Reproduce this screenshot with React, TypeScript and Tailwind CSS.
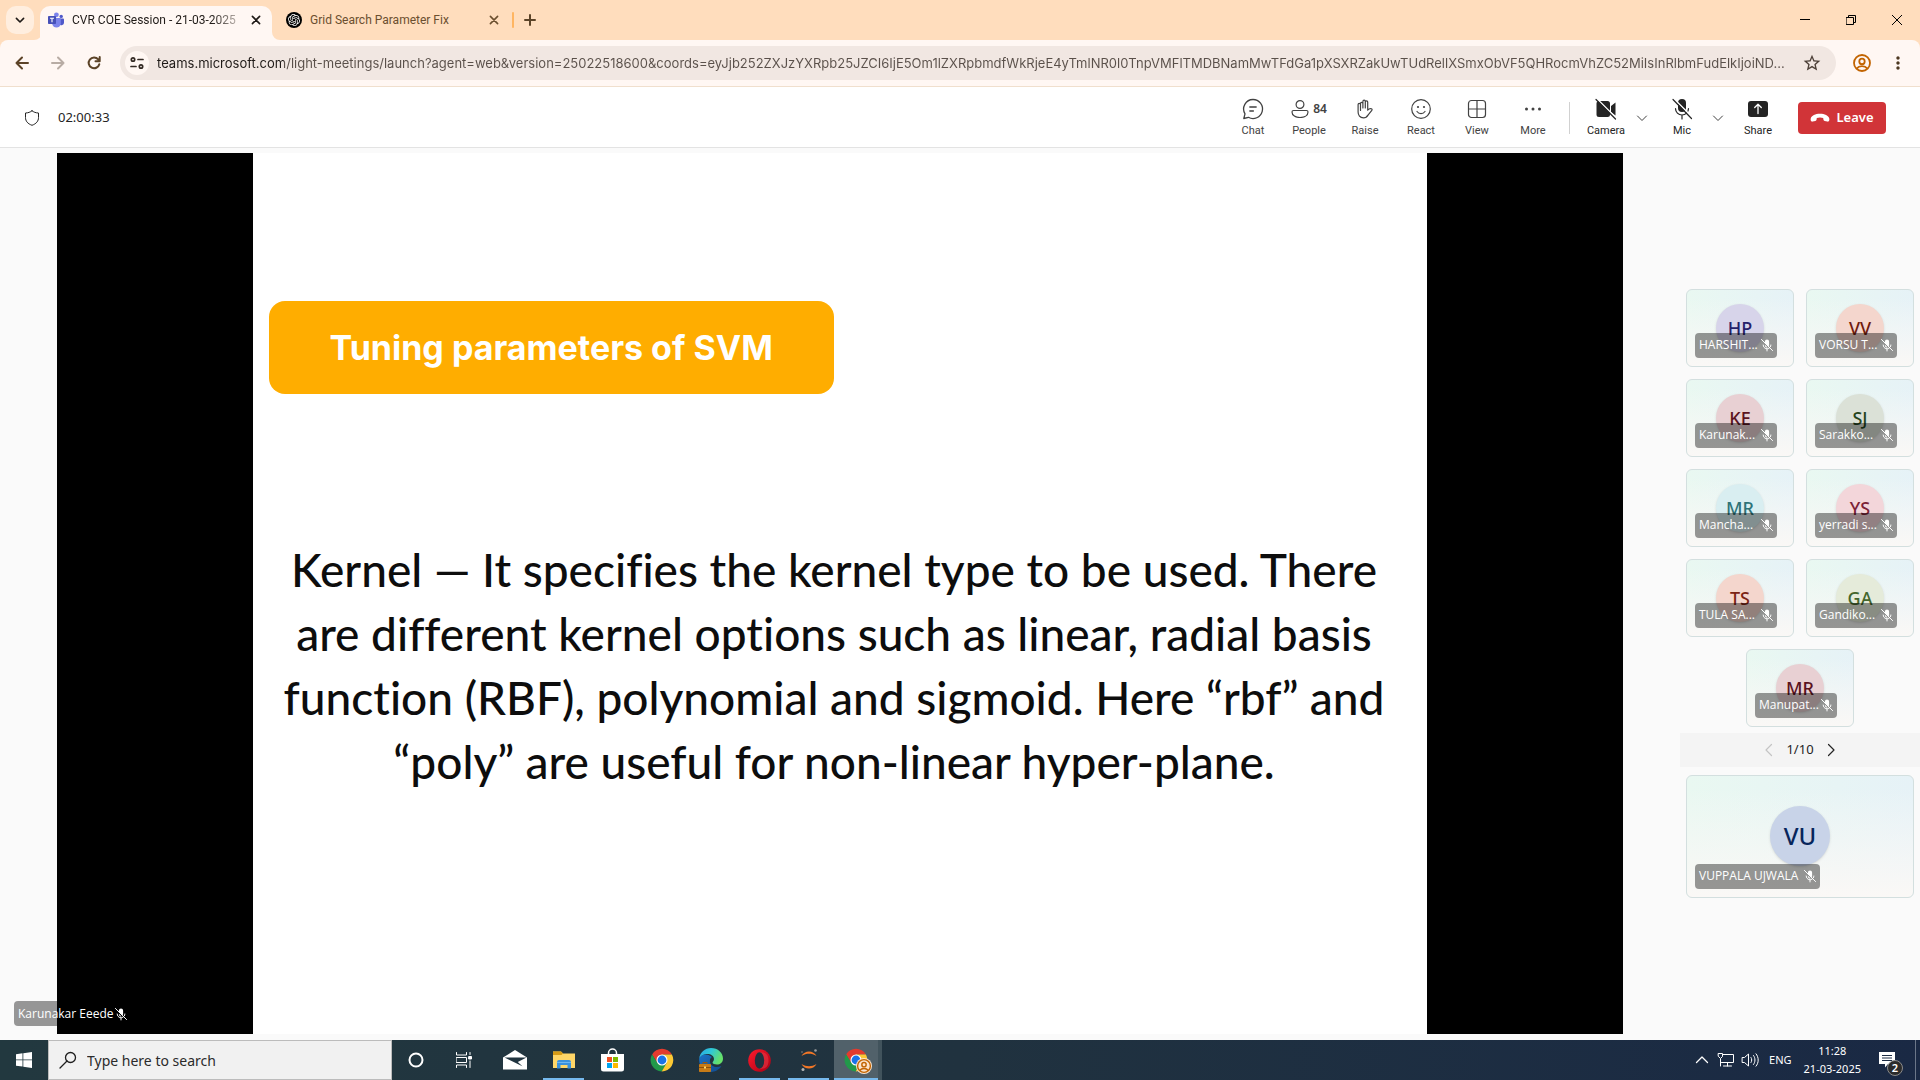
import type { ReactNode } from "react";
import { SiOpenai } from "react-icons/si";
import { MdOutlineStarBorder, MdMoreVert } from "react-icons/md";

const PAGE_URL =
  "teams.microsoft.com/light-meetings/launch?agent=web&version=25022518600&coords=eyJjb252ZXJzYXRpb25JZCI6IjE5Om1lZXRpbmdfWkRjeE4yTmlNR0l0TnpVMFlTMDBNamMwTFdGa1pXSXRZakUwTUdRellXSmxObVF5QHRocmVhZC52MiIsInRlbmFudElkIjoiND...";

type Stroke = { className?: string; children: ReactNode; width?: number; size?: number };

function Line({ className = "size-5", children, width = 1, size = 20 }: Stroke) {
  return (
    <svg
      className={className}
      viewBox={`0 0 ${size} ${size}`}
      fill="none"
      stroke="currentColor"
      strokeWidth={width}
      strokeLinecap="round"
      strokeLinejoin="round"
      aria-hidden="true"
    >
      {children}
    </svg>
  );
}

function MicOff({ className = "size-4" }: { className?: string }) {
  return (
    <Line className={className} width={1.4}>
      <path d="M7 7.500V5a3 3 0 0 1 6 0v5.500c0 .6-.1 1-.3 1.400zM7 9.500l4 4A3 3 0 0 1 7 10.500z" fill="currentColor" stroke="none" />
      <path d="M4.500 10a5.500 5.500 0 0 0 8.500 4.600M15.500 10c0 .9-.2 1.800-.6 2.500M10 15.500v3" />
      <path d="M2 2l16 16" />
    </Line>
  );
}

function TeamsLogo() {
  return (
    <svg className="size-4" viewBox="0 0 16 16" aria-hidden="true">
      <circle cx="13.2" cy="4.4" r="1.7" fill="#5059c9" />
      <path d="M11 6.6h4.2c.4 0 .8.4.8.8v3.2a2.6 2.6 0 0 1-4.6 1.7z" fill="#5059c9" />
      <circle cx="8.4" cy="2.8" r="2.4" fill="#7b83eb" />
      <path d="M5 6h7c.5 0 .8.4.8.8v4.4a4.3 4.3 0 0 1-8.6 0V6.8c0-.5.3-.8.8-.8z" fill="#7b83eb" />
      <rect x="0" y="4" width="8" height="8" rx=".8" fill="#4650b8" />
      <path d="M2 6.2h4M4 6.2v4" stroke="#fff" strokeWidth="1.1" />
    </svg>
  );
}

function ChromeLogo() {
  return (
    <svg className="size-6" viewBox="0 0 48 48" aria-hidden="true">
      <path d="M43.8 13A23 23 0 0 0 4.2 13L14.5 29.5 24 24V13z" fill="#e33b2e" />
      <path d="M4.2 12.5A23 23 0 0 0 23.4 47L33.5 29.5 24 24 14.5 29.5z" fill="#21994a" />
      <path d="M23.4 47A23 23 0 0 0 43.8 13H24v11l9.5 5.5z" fill="#fcc934" />
      <circle cx="24" cy="24" r="11" fill="#fff" />
      <circle cx="24" cy="24" r="8.8" fill="#1a73e8" />
    </svg>
  );
}

function ProfileGlyph({ className, stroke = "#c26401", fill = "none" }: { className: string; stroke?: string; fill?: string }) {
  return (
    <svg className={className} viewBox="0 0 20 20" fill={fill} stroke={stroke} strokeWidth="1.8" aria-hidden="true">
      <circle cx="10" cy="10" r="8" />
      <circle cx="10" cy="8.4" r="2.7" fill="none" />
      <path d="M4.6 15.6c1.4-1.7 3.2-2.4 5.4-2.4s4 .7 5.4 2.4" fill="none" />
    </svg>
  );
}

function BrowserTabs() {
  return (
    <header className="flex h-10 items-end bg-[#ffddbd] font-[Roboto,sans-serif] text-xs">
      <button aria-label="Search tabs" className="mb-1.5 ml-1.5 flex size-7 items-center justify-center rounded-[10px] bg-[#ffeedf] text-[#1f1a17]">
        <Line className="size-4" width={2}>
          <path d="M5.5 8l4.5 4.5L14.5 8" />
        </Line>
      </button>
      <svg className="size-2 text-[#fff7f3]" viewBox="0 0 8 8" aria-hidden="true"><path d="M8 0v8H0a8 8 0 0 0 8-8z" fill="currentColor" /></svg>
      <div className="-ml-0.5 flex h-[34px] w-[232px] items-center rounded-t-[10px] bg-[#fff7f3] pr-1 pb-1.5 pl-2 text-[#1f1a17]">
        <TeamsLogo />
        <span className="ml-2 w-[164px] overflow-hidden whitespace-nowrap bg-linear-to-r from-[#1f1a17] from-85% to-[#b5aca6] bg-clip-text text-transparent">
          CVR COE Session - 21-03-2025
        </span>
        <button aria-label="Close tab" className="ml-auto flex size-6 items-center justify-center">
          <Line className="size-4" width={2}><path d="M5.5 5.5l9 9M14.5 5.5l-9 9" /></Line>
        </button>
      </div>
      <svg className="size-2 text-[#fff7f3]" viewBox="0 0 8 8" aria-hidden="true"><path d="M0 0v8h8a8 8 0 0 1-8-8z" fill="currentColor" /></svg>
      <div className="flex h-[34px] w-[226px] items-center pb-1.5 pl-1.5 text-[#6b4f2f]">
        <span className="flex size-4 items-center justify-center rounded-full bg-black text-white">
          <SiOpenai className="size-3" />
        </span>
        <span className="ml-2 whitespace-nowrap">Grid Search Parameter Fix</span>
        <button aria-label="Close tab" className="ml-auto flex size-6 items-center justify-center">
          <Line className="size-4" width={2}><path d="M5.5 5.5l9 9M14.5 5.5l-9 9" /></Line>
        </button>
      </div>
      <span className="mb-3 ml-1.5 h-4 w-0.5 rounded bg-[#ffb561]" />
      <button aria-label="New tab" className="mb-2 ml-1 flex size-6 items-center justify-center text-[#5c4327]">
        <Line className="size-5" width={2}><path d="M10 5v10M5 10h10" /></Line>
      </button>
      <div className="ml-auto flex h-10 text-black">
        <button aria-label="Minimize" className="flex w-[46px] items-center justify-center">
          <Line className="size-2.5" size={10}><path d="M0 4.5h10" /></Line>
        </button>
        <button aria-label="Restore" className="flex w-[46px] items-center justify-center">
          <Line className="size-2.5" size={10}><path d="M.5 2.5h7v7h-7zM2.5 2.5v-2h7v7h-2" /></Line>
        </button>
        <button aria-label="Close" className="flex w-[46px] items-center justify-center">
          <Line className="size-2.5" size={10}><path d="M0 0l10 10M10 0L0 10" /></Line>
        </button>
      </div>
    </header>
  );
}

function AddressBar() {
  return (
    <div className="bg-[#ffddbd]">
      <div className="flex h-[47px] items-center rounded-t-lg border-b border-[#f0dfcd] bg-[#fff7f3] pl-2.5 text-[#5c4327]">
        <button aria-label="Back" className="flex size-6 items-center justify-center">
          <Line className="size-4" width={2} size={16}><path d="M14 8H2.5M8 2.5L2.5 8 8 13.5" /></Line>
        </button>
        <button aria-label="Forward" className="ml-3 flex size-6 items-center justify-center text-[#b8aca4]">
          <Line className="size-4" width={2} size={16}><path d="M2 8h11.5M8 2.5L13.5 8 8 13.5" /></Line>
        </button>
        <button aria-label="Reload" className="ml-3 flex size-6 items-center justify-center">
          <Line className="size-4" width={2} size={16}><path d="M13.3 9.200A5.400 5.400 0 1 1 12.200 4.400L13.600 6M13.700 2v4.200H9.500" /></Line>
        </button>
        <div className="ml-3.5 flex h-[34px] min-w-0 flex-1 items-center rounded-full bg-[#f1e7e2] pl-[5px]">
          <button aria-label="Site information" className="flex size-6 shrink-0 items-center justify-center rounded-full bg-[#fff7f3] text-[#332a24]">
            <Line className="size-4" width={1.7} size={16}>
              <circle cx="4" cy="4.5" r="1.7" /><path d="M9 4.5h5M2 11.5h5" /><circle cx="12" cy="11.5" r="1.7" />
            </Line>
          </button>
          <input
            aria-label="Address"
            readOnly
            value={PAGE_URL}
            className="ml-2 h-6 min-w-0 flex-1 bg-[linear-gradient(90deg,#1f1a17_127px,#5a504a_127px)] bg-clip-text font-[Inter,sans-serif] text-[13px] text-transparent outline-none"
          />
          <button aria-label="Bookmark this tab" className="mr-3.5 ml-2 text-[#4d4038]">
            <MdOutlineStarBorder className="size-5" />
          </button>
        </div>
        <button aria-label="Profile" className="ml-4"><ProfileGlyph className="size-5" /></button>
        <button aria-label="Menu" className="mr-3 ml-4 text-[#4d3820]"><MdMoreVert className="size-5" /></button>
      </div>
    </div>
  );
}

function Tool({ label, children, className = "w-14 text-[#424242]" }: { label: string; children: ReactNode; className?: string }) {
  return (
    <button className={`flex flex-col items-center ${className}`}>
      <span className="flex h-6 items-center">{children}</span>
      <span className="mt-0.5 font-[Roboto,sans-serif] text-[11px] leading-4">{label}</span>
    </button>
  );
}

function Chevron({ label }: { label: string }) {
  return (
    <button aria-label={label} className="flex w-6 items-center justify-center text-[#424242]">
      <Line className="size-3" size={12}><path d="M1.5 4L6 8.500 10.500 4" /></Line>
    </button>
  );
}

function MeetingBar() {
  return (
    <div className="flex h-[61px] items-center border-b border-[#e3e3e3] bg-white pt-px pl-6 text-[#242424]">
      <Line className="size-4" size={16}>
        <path d="M8 .8c1.800 1.400 3.800 2.100 6.500 2.200v4.500c0 3.700-2.200 6.200-6.500 7.800-4.300-1.600-6.500-4.100-6.500-7.800V3C4.200 2.900 6.200 2.200 8 .8z" />
      </Line>
      <time className="ml-[18px] text-[13px]">02:00:33</time>
      <div className="ml-auto flex items-center">
        <Tool label="Chat">
          <Line className="size-6" size={24} width={1.3}>
            <path d="M12 2.500a9.500 9.500 0 1 1-4.600 17.800l-4.600 1.200 1.200-4.600A9.500 9.500 0 0 1 12 2.500zM8.800 10h6.400M8.800 14h3.600" />
          </Line>
        </Tool>
        <Tool label="People">
          <Line className="size-[18px]" size={18} width={1.2}>
            <circle cx="9" cy="4.500" r="3.900" />
            <path d="M2.500 10.500h13c.8 0 1.500.7 1.500 1.500 0 3.600-3.600 5.500-8 5.500S1 15.600 1 12c0-.8.7-1.500 1.500-1.500z" />
          </Line>
          <b className="ml-1 text-xs font-semibold">84</b>
        </Tool>
        <Tool label="Raise">
          <Line className="size-5" width={1.2}>
            <path d="M5.500 11.500V4.600a1.200 1.200 0 0 1 2.400 0V9M7.900 9V2.400a1.200 1.200 0 0 1 2.400 0V9M10.300 9V3.100a1.200 1.200 0 0 1 2.400 0V9.500M3.100 11V5.600a1.200 1.200 0 0 1 2.400 0M12.700 3.500v7.700c1-1.200 2.500-1.900 3.700-1.400.9.400.9 1.200.2 1.900l-3.400 4.200c-1.300 2.200-2.700 3-4.700 3-3.600 0-5.400-2.600-5.400-5.800V11" />
          </Line>
        </Tool>
        <Tool label="React">
          <Line width={1.2}>
            <circle cx="10" cy="10" r="9.300" />
            <path d="M6 12.500c1 1.500 2.300 2.200 4 2.200s3-.7 4-2.200" />
            <circle cx="7" cy="8" r="1.100" fill="currentColor" stroke="none" /><circle cx="13" cy="8" r="1.100" fill="currentColor" stroke="none" />
          </Line>
        </Tool>
        <Tool label="View">
          <Line width={1.2}><rect x="1.500" y="1.500" width="17" height="17" rx="3" /><path d="M10 1.500v17M1.500 10h17" /></Line>
        </Tool>
        <Tool label="More">
          <svg className="size-5" viewBox="0 0 20 20" fill="currentColor" aria-hidden="true">
            <circle cx="3.500" cy="10" r="1.500" /><circle cx="10" cy="10" r="1.500" /><circle cx="16.500" cy="10" r="1.500" />
          </svg>
        </Tool>
        <span className="mr-3 ml-2 h-8 w-px bg-[#d1d1d1]" />
        <Tool label="Camera" className="w-12">
          <Line size={22} className="size-[22px]" width={1.2}>
            <path d="M5 3h7.500A2.500 2.500 0 0 1 15 5.500v11a2.500 2.500 0 0 1-2.500 2.500H4a2.500 2.500 0 0 1-2.500-2.500v-11A2.500 2.500 0 0 1 4 3zM16 8l4.500-3.500v13L16 14z" fill="currentColor" stroke="none" />
            <path d="M2.200 1l19 19" stroke="#fff" strokeWidth="1.600" />
            <path d="M1 1.500l19.500 19.500" />
          </Line>
        </Tool>
        <Chevron label="Camera options" />
        <Tool label="Mic" className="ml-1 w-12">
          <Line size={22} className="size-[22px]" width={1.2}>
            <rect x="7" y="1" width="8" height="13" rx="4" fill="currentColor" stroke="none" />
            <path d="M4.500 10.500a6.500 6.500 0 0 0 13 0M11 17v4" />
            <path d="M3.200 1l18 18" stroke="#fff" strokeWidth="1.600" />
            <path d="M2 1.500L20.500 20.500" />
          </Line>
        </Tool>
        <Chevron label="Mic options" />
        <Tool label="Share" className="ml-1 w-12">
          <Line width={1.3}>
            <rect x="0" y="2" width="20" height="16" rx="3" fill="currentColor" stroke="none" />
            <path d="M10 14.500v-9M6.700 8.500L10 5.200l3.300 3.300" stroke="#fff" />
          </Line>
        </Tool>
        <button className="mr-[34px] ml-4 flex h-8 w-[88px] items-center justify-center gap-1.5 rounded bg-[#d13438] text-[13px] font-semibold text-white">
          <svg className="size-5" viewBox="0 0 20 20" fill="currentColor" aria-hidden="true">
            <path d="M10 5.800c4.700 0 8.400 1.800 9.200 4.500.4 1.300.1 2.700-.8 3.200-.3.200-.7.200-1.100.1l-2.600-.6c-.7-.2-1.200-.7-1.300-1.400l-.2-1.600c-2-.7-4.400-.7-6.400 0l-.2 1.600c-.1.700-.6 1.200-1.300 1.400l-2.600.6c-.4.100-.8.100-1.100-.1-.9-.5-1.200-1.900-.8-3.200C1.600 7.600 5.300 5.800 10 5.800z" />
          </svg>
          Leave
        </button>
      </div>
    </div>
  );
}

type Person = { initials: string; name: string; color: string };

const PEOPLE: Person[] = [
  { initials: "HP", name: "HARSHIT...", color: "bg-[#d7d4ea] text-[#26216a]" },
  { initials: "VV", name: "VORSU T...", color: "bg-[#f4d6cd] text-[#701b0e]" },
  { initials: "KE", name: "Karunak...", color: "bg-[#e8d0d3] text-[#5b1320]" },
  { initials: "SJ", name: "Sarakko...", color: "bg-[#dbe1d7] text-[#26451d]" },
  { initials: "MR", name: "Mancha...", color: "bg-[#d9eef1] text-[#2f7378]" },
  { initials: "YS", name: "yerradi s...", color: "bg-[#f3d6da] text-[#7c2237]" },
  { initials: "TS", name: "TULA SA...", color: "bg-[#f4d6cd] text-[#7c2415]" },
  { initials: "GA", name: "Gandiko...", color: "bg-[#e5ebda] text-[#44662c]" },
  { initials: "MR", name: "Manupat...", color: "bg-[#e8d0d3] text-[#5b1320]" },
];

const TILE =
  "relative flex items-center justify-center rounded-md border border-[#d3dfdf] bg-[linear-gradient(to_bottom,transparent_10%,#faf8f6_100%),linear-gradient(to_right,#e9f8f1,#e6f2f7)]";

function NameTag({ name, className = "" }: { name: string; className?: string }) {
  return (
    <span className={`absolute flex h-[25px] items-center justify-between rounded bg-black/40 pr-[3px] pl-1 font-['Open_Sans',sans-serif] text-xs whitespace-nowrap text-white ${className}`}>
      {name}
      <MicOff className="size-3.5 shrink-0" />
    </span>
  );
}

function Tile({ person }: { person: Person }) {
  return (
    <li className={`h-[78px] w-[108px] ${TILE}`}>
      <span className={`flex size-12 items-center justify-center rounded-full text-lg font-medium shadow-sm ${person.color}`}>{person.initials}</span>
      <NameTag name={person.name} className="bottom-2 left-2 w-[82px]" />
    </li>
  );
}

function Roster() {
  return (
    <aside className="flex w-60 shrink-0 flex-col items-center justify-center pb-0.5">
      <ul className="flex flex-wrap justify-center gap-3 px-1.5">
        {PEOPLE.map((p) => (
          <Tile key={p.name} person={p} />
        ))}
      </ul>
      <nav aria-label="Participant pages" className="mt-1.5 flex h-[34px] w-full items-center justify-center gap-2.5 bg-[#f4f4f4] text-[13px] text-[#242424]">
        <button aria-label="Previous page" disabled className="text-[#c4c4c4]">
          <Line className="size-3.5" size={14} width={1.2}><path d="M9.500 1.500L4 7l5.500 5.500" /></Line>
        </button>
        <span>1/10</span>
        <button aria-label="Next page">
          <Line className="size-3.5" size={14} width={1.2}><path d="M4.500 1.500L10 7l-5.500 5.500" /></Line>
        </button>
      </nav>
      <div className="mt-2 w-full px-1.5">
        <div className={`h-[123px] ${TILE}`}>
          <span className="flex size-[60px] items-center justify-center rounded-full bg-[#c8d3e8] text-2xl font-medium text-[#07255b] shadow">VU</span>
          <NameTag name="VUPPALA UJWALA" className="bottom-2 left-2 w-[125px]" />
        </div>
      </div>
    </aside>
  );
}

function SharedScreen() {
  return (
    <main className="relative flex min-w-0 flex-1 justify-center pt-[5px] pb-1.5">
      <section aria-label="Shared screen" className="flex aspect-video h-full justify-center bg-black">
        <div className="aspect-4/3 h-full bg-white pt-[148px] pl-4">
          <h1 className="flex h-[93px] w-[565px] items-center justify-center rounded-2xl bg-[#ffad00] font-[Inter,sans-serif] text-[34px] font-bold text-white">
            Tuning parameters of SVM
          </h1>
          <p className="mt-36 pr-7 text-center font-[Lato,sans-serif] text-[46px] leading-16 font-medium whitespace-nowrap text-[#0d0d0d] [font-variant-ligatures:none]">
            Kernel — It specifies the kernel type to be used. There
            <br />
            are different kernel options such as linear, radial basis
            <br />
            function (RBF), polynomial and sigmoid. Here “rbf” and
            <br />
            “poly” are useful for non-linear hyper-plane.
          </p>
        </div>
      </section>
      <NameTag name="Karunakar Eeede" className="bottom-3.5 left-3.5 w-[116px]" />
    </main>
  );
}

function TaskButton({ label, children, open = false, className = "w-[49px]" }: { label: string; children: ReactNode; open?: boolean; className?: string }) {
  return (
    <button aria-label={label} className={`relative flex h-10 items-center justify-center ${className}`}>
      {children}
      {open && <span className="absolute inset-x-1 bottom-0 h-0.5 bg-[#76b9ed]" />}
    </button>
  );
}

function Taskbar() {
  return (
    <footer className="flex h-10 shrink-0 items-center bg-linear-to-r from-[#22383f] via-[#20323f] to-[#1a2944] text-white">
      <button aria-label="Start" className="flex w-12 justify-center">
        <svg className="size-4" viewBox="0 0 16 16" fill="currentColor" aria-hidden="true">
          <path d="M0 2.200l6.500-.9v6.200H0zM7.300 1.200L16 0v7.500H7.300zM0 8.300h6.500v6.300L0 13.700zM7.300 8.300H16V16l-8.700-1.200z" />
        </svg>
      </button>
      <label className="flex h-10 w-[344px] items-center border border-[#bcbcbc] bg-[#f1f1f1] pl-2.5 text-[#1f1f1f]">
        <Line className="size-[18px]" size={18} width={1.3}><circle cx="11.500" cy="6.500" r="5" /><path d="M8 10L1 17" /></Line>
        <input aria-label="Type here to search" placeholder="Type here to search" className="ml-2.5 min-w-0 flex-1 bg-transparent pt-0.5 text-sm outline-none placeholder:text-[#2b2b2b]" />
      </label>
      <TaskButton label="Cortana" className="w-12">
        <svg className="size-4" viewBox="0 0 16 16" aria-hidden="true"><circle cx="8" cy="8" r="6.500" fill="none" stroke="#fff" strokeWidth="2" /></svg>
      </TaskButton>
      <TaskButton label="Task View" className="mr-0.5 w-12">
        <Line className="size-4" size={16}>
          <path d="M.5.500v2.500h10V.500M.5 15.500V13h10v2.500M.5 5.500h10v5H.500zM14 .500v2M14 9v6.500" />
          <rect x="13" y="4.500" width="2.500" height="2.500" fill="currentColor" />
        </Line>
      </TaskButton>
      <TaskButton label="Mail">
        <svg className="h-5 w-6" viewBox="0 0 24 20" aria-hidden="true">
          <path d="M0 7.500L12 0l12 7.500V19.500H0z" fill="#fff" />
          <path d="M1.500 7.500h22L14.800 12l4.600 4.200z" fill="#20343f" />
        </svg>
      </TaskButton>
      <TaskButton label="File Explorer" open>
        <svg className="size-[22px]" viewBox="0 0 22 22" aria-hidden="true">
          <path d="M0 2.500h8l2 2h12V19H0z" fill="#ffd667" />
          <path d="M0 2.500h8l2 2-1.500 1.500H0z" fill="#d79b15" />
          <path d="M4 19.500v-6.500a2 2 0 0 1 2-2h10a2 2 0 0 1 2 2v6.500h-3.500V16h-7v3.500z" fill="#3b91dc" />
          <path d="M4 13.500h14" stroke="#6db6f0" />
        </svg>
      </TaskButton>
      <TaskButton label="Microsoft Store">
        <svg className="h-6 w-[23px]" viewBox="0 0 23 24" aria-hidden="true">
          <path d="M7.500 6.500V5a4 4 0 0 1 8 0v1.500" fill="none" stroke="#fff" strokeWidth="1.500" />
          <path d="M0 6h23v15a2.500 2.500 0 0 1-2.500 2.500h-18A2.500 2.500 0 0 1 0 21z" fill="#fff" />
          <path d="M6 9h5v5H6z" fill="#f25022" /><path d="M12 9h5v5h-5z" fill="#7fba00" />
          <path d="M6 15h5v5H6z" fill="#00a4ef" /><path d="M12 15h5v5h-5z" fill="#ffb900" />
        </svg>
      </TaskButton>
      <TaskButton label="Chrome"><ChromeLogo /></TaskButton>
      <TaskButton label="Edge">
        <svg className="size-6" viewBox="0 0 24 24" aria-hidden="true">
          <defs>
            <linearGradient id="edge-top" x1="0" y1="0" x2="1" y2=".4"><stop stopColor="#2aa5e5" /><stop offset=".5" stopColor="#2fc8d8" /><stop offset="1" stopColor="#66e16a" /></linearGradient>
            <linearGradient id="edge-low" x1="0" y1="0" x2="1" y2="1"><stop stopColor="#1b72c8" /><stop offset="1" stopColor="#114a8b" /></linearGradient>
          </defs>
          <path d="M.3 10A12 12 0 0 0 20.500 20.500c.9-.8 1.500-1.700 1.800-2.500-5 2.500-10.500.5-11.300-4C10.500 11 12 9.500 13 9 8 5 2 6 .3 10z" fill="url(#edge-low)" />
          <path d="M.2 10.500C1 4.500 6 0 12 0c7 0 12 5 12 10.500 0 4-3 6-6 6-2.500 0-4.500-1-4.500-2 0-.8 1.500-1.500 1.500-3.500 0-3-3-5-6.500-5-4 0-7.300 2-8.300 4.500z" fill="url(#edge-top)" />
          <rect x="0" y="16" width="12" height="8" rx=".8" fill="#c77b17" /><path d="M4 16v-1.500h4V16" fill="none" stroke="#9a5a0b" /><path d="M0 19.500h12" stroke="#8b4f08" /><path d="M5 18.500h2v2H5z" fill="#ffd667" />
        </svg>
      </TaskButton>
      <TaskButton label="Opera" open>
        <svg className="size-[23px]" viewBox="0 0 23 23" aria-hidden="true">
          <defs><linearGradient id="opera" x1="0" y1="0" x2="1" y2="1"><stop stopColor="#ff1b2d" /><stop offset="1" stopColor="#a70014" /></linearGradient></defs>
          <circle cx="11.500" cy="11.500" r="11.300" fill="url(#opera)" />
          <path d="M11.500 3c5 0 9 1.500 9 8.500s-4 8.500-9 8.500z" fill="#e8404c" opacity=".5" />
          <ellipse cx="11.500" cy="11.500" rx="4.700" ry="8.300" fill="#20323f" />
        </svg>
      </TaskButton>
      <TaskButton label="Jupyter" open>
        <svg className="h-6 w-5" viewBox="0 0 20 24" aria-hidden="true">
          <path d="M2.500 8C4 5 7 3.500 10 3.500S16 5 17.500 8C15 6.300 12.500 5.800 10 5.800S5 6.300 2.500 8zM2.500 16c1.500 3 4.500 4.500 7.500 4.500s6-1.500 7.500-4.500c-2.500 1.700-5 2.200-7.500 2.200S5 17.700 2.500 16z" fill="#f37726" />
          <circle cx="16.500" cy="2.500" r="1.300" fill="#9e9e9e" /><circle cx="4" cy="21.500" r="1.500" fill="#b5b5b5" /><circle cx="3" cy="4" r=".8" fill="#8a8a8a" />
        </svg>
      </TaskButton>
      <button aria-label="Chrome, current window" className="relative ml-px flex h-10 w-12 items-center justify-center border-r-4 border-[#41535c] bg-[#51616a]">
        <ChromeLogo />
        <span className="absolute right-1.5 bottom-1.5"><ProfileGlyph className="size-4 rounded-full bg-[#fbe3cb]" /></span>
        <span className="absolute inset-x-0 bottom-0 h-0.5 bg-[#76b9ed]" />
      </button>
      <div className="ml-auto flex h-10 items-center">
        <button aria-label="Show hidden icons"><Line className="size-3.5" size={14} width={1.3}><path d="M1.500 9.500L7 4l5.500 5.500" /></Line></button>
        <button aria-label="Network" className="ml-2">
          <Line className="size-[18px]" size={18}><path d="M4 3.500h12.500v8H4.500M10.500 11.500v3.500M6.500 15h8M3.500 8v7" /><path d="M1.500 2.500h4v3l-2 2-2-2z" fill="#1c2c44" /></Line>
        </button>
        <button aria-label="Volume" className="ml-1.5">
          <Line className="size-[18px]" size={18}><path d="M1.500 6.500h2L7.500 3v12l-4-3.500h-2zM10 6.500c1 1.500 1 3.500 0 5M12.500 4.500c2 2.500 2 6.500 0 9M15 2.800c3 3.500 3 9 0 12.400" /></Line>
        </button>
        <span className="ml-2.5 text-[11px]">ENG</span>
        <time className="ml-3 text-center text-[11px] leading-[18px]">11:28<br />21-03-2025</time>
        <button aria-label="2 notifications" className="relative mr-3 ml-[18px] flex h-10 w-6 items-center">
          <svg className="size-4" viewBox="0 0 16 16" aria-hidden="true"><path d="M0 0h16v12H9l-3 3.500V12H0z" fill="#fff" /><path d="M3 3.500h10M3 6h10M3 8.500h10" stroke="#1c2c44" /></svg>
          <span className="absolute right-0 bottom-1 flex size-4 items-center justify-center rounded-full border border-[#8b8b8b] bg-[#2b2b2b] text-[11px] font-semibold">2</span>
        </button>
        <span className="mr-1 h-10 w-px bg-[#6b7688]" />
      </div>
    </footer>
  );
}

export default function App() {
  return (
    <div className="flex h-screen flex-col overflow-hidden bg-[#fafafa] font-['Noto_Sans',sans-serif]">
      <BrowserTabs />
      <AddressBar />
      <MeetingBar />
      <div className="flex min-h-0 flex-1">
        <SharedScreen />
        <Roster />
      </div>
      <Taskbar />
    </div>
  );
}
